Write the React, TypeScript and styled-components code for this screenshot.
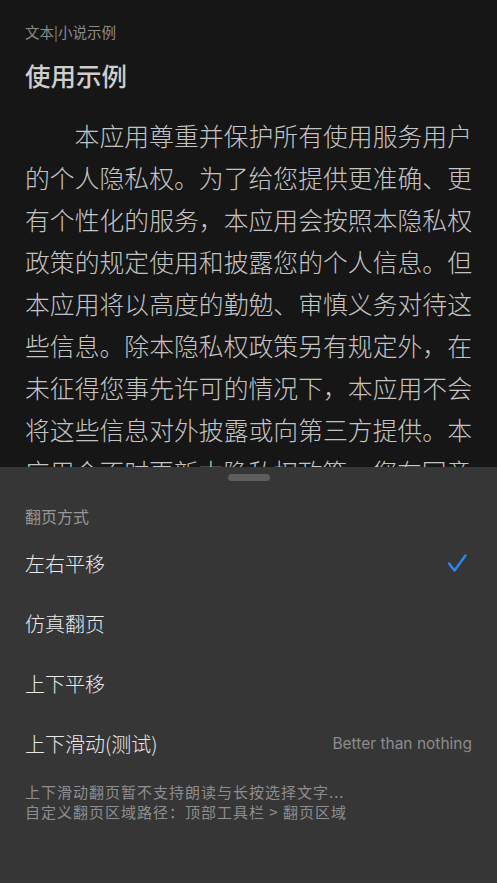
import styled, { createGlobalStyle } from "styled-components";

const GlobalStyle = createGlobalStyle`
    html, body {
        margin: 0;
        padding: 0;
        background: #161616;
    }
    body {
        font-family: "Noto Sans CJK SC", "Inter", sans-serif;
        -webkit-font-smoothing: antialiased;
    }
`;

const pageModes = [
    { label: "左右平移", selected: true },
    { label: "仿真翻页" },
    { label: "上下平移" },
    { label: "上下滑动(测试)", hint: "Better than nothing" },
];

// only what shows above the sheet, the rest is hidden anyway
const bodyText =
    "本应用尊重并保护所有使用服务用户的个人隐私权。为了给您提供更准确、更有个性化的服务，本应用会按照本隐私权政策的规定使用和披露您的个人信息。但本应用将以高度的勤勉、审慎义务对待这些信息。除本隐私权政策另有规定外，在未征得您事先许可的情况下，本应用不会将这些信息对外披露或向第三方提供。本应用会不时更新本隐私权政策。您在同意";

const footnotes = [
    "上下滑动翻页暂不支持朗读与长按选择文字...",
    "自定义翻页区域路径：顶部工具栏 > 翻页区域",
];

const CheckIcon = () => (
    <svg width="24" height="24" viewBox="0 0 24 24" fill="none">
        <polyline
            points="4,12.5 9.5,19.5 20.5,4.5"
            stroke="#2f86ee"
            strokeWidth="2.4"
            strokeLinecap="round"
            strokeLinejoin="round"
        />
    </svg>
);

const App = () => {
    return (
        <>
            <GlobalStyle />
            <Screen>
                <Reader>
                    <Caption>文本|小说示例</Caption>
                    <Title>使用示例</Title>
                    <Paragraph>{bodyText}</Paragraph>
                </Reader>

                <Sheet>
                    <Handle />
                    <SectionLabel>翻页方式</SectionLabel>
                    <OptionList>
                        {pageModes.map((mode) => (
                            <OptionRow key={mode.label}>
                                <OptionLabel>{mode.label}</OptionLabel>
                                {mode.selected && <CheckIcon />}
                                {mode.hint && <Hint>{mode.hint}</Hint>}
                            </OptionRow>
                        ))}
                    </OptionList>
                    <Footnote>
                        {footnotes.map((line) => (
                            <FootnoteLine key={line}>{line}</FootnoteLine>
                        ))}
                    </Footnote>
                </Sheet>
            </Screen>
        </>
    );
};

const Screen = styled.div`
    position: relative;
    width: 497px;
    height: 883px;
    overflow: hidden;
    background: #161616;
`;

const Reader = styled.main`
    padding: 22px 25px 0;
`;

const Caption = styled.div`
    font-size: 14.5px;
    line-height: 20px;
    color: #8a8a8a;
`;

const Title = styled.h1`
    margin: 16px 0 0;
    font-size: 25.5px;
    line-height: 34px;
    font-weight: 500;
    color: #cdcdcd;
`;

const Paragraph = styled.p`
    margin: 22px 0 0;
    font-size: 24.8px;
    line-height: 42px;
    font-weight: 300;
    text-indent: 2em;
    text-align: justify;
    color: #c4c4c4;
`;

const Sheet = styled.section`
    position: absolute;
    left: 0;
    right: 0;
    bottom: 0;
    height: 416px;
    display: flex;
    flex-direction: column;
    padding: 0 25px;
    background: #363636;
`;

const Handle = styled.div`
    align-self: center;
    width: 42px;
    height: 7px;
    margin-top: 7px;
    border-radius: 4px;
    background: #5e5e5e;
`;

const SectionLabel = styled.div`
    margin-top: 25px;
    font-size: 16px;
    line-height: 20px;
    color: #979797;
`;

const OptionList = styled.div`
    display: flex;
    flex-direction: column;
    margin-top: 7px;
`;

const OptionRow = styled.div`
    display: flex;
    align-items: center;
    justify-content: space-between;
    height: 60px;

    svg {
        margin-right: 3px;
    }
`;

const OptionLabel = styled.span`
    font-size: 20px;
    font-weight: 300;
    color: #e8e8e8;
`;

const Hint = styled.span`
    font-family: "Inter", "Noto Sans CJK SC", sans-serif;
    font-size: 15.5px;
    color: #8c8c8c;
`;

const Footnote = styled.div`
    display: flex;
    flex-direction: column;
    margin-top: 9px;
`;

const FootnoteLine = styled.div`
    font-size: 15px;
    letter-spacing: 1px;
    line-height: 19.5px;
    white-space: pre;
    color: #8e8e8e;
`;

export default App;
